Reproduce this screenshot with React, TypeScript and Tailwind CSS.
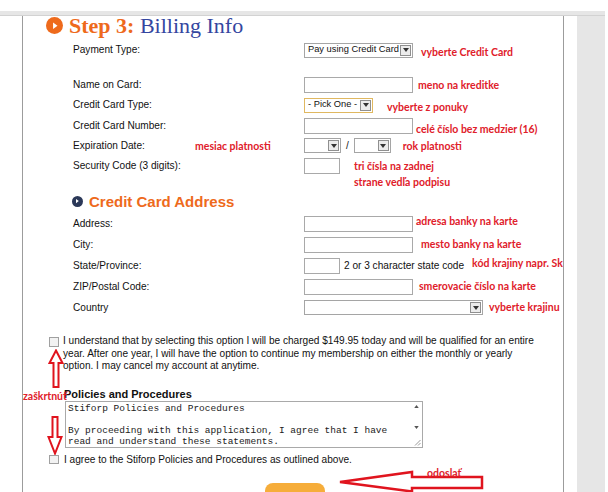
import React from "react";

const red = "text-[#e0202a]";

function Select({ w, text, className = "" }: { w: string; text?: string; className?: string }) {
  return (
    <div className={`shrink-0 flex items-center h-[15px] border bg-white ${w} ${className}`}>
      <span className="flex-1 pl-[3px] text-[9.3px] leading-none whitespace-nowrap overflow-hidden">{text}</span>
      <span className="w-[11px] h-[11px] mr-[1px] border border-[#8f8f8f] bg-[#ececec] flex items-center justify-center">
        <svg width="6" height="4" viewBox="0 0 6 4">
          <path d="M0 0 L6 0 L3 4 Z" fill="#333" />
        </svg>
      </span>
    </div>
  );
}

function Input({ w }: { w: string }) {
  return <div className={`shrink-0 h-[16px] border border-[#a9a9a9] bg-white ${w}`} />;
}

function Note({ children, className = "" }: { children: React.ReactNode; className?: string }) {
  return (
    <span className={`font-['Lato'] font-bold text-[10.5px] whitespace-nowrap ${red} ${className}`}>
      {children}
    </span>
  );
}

function Row({ label, children, h = "h-[21px]", extra }: { label: string; children?: React.ReactNode; h?: string; extra?: React.ReactNode }) {
  return (
    <div className={`flex items-center ${h}`}>
      <div className="w-[231px] shrink-0 flex items-center">
        <span className="w-[122px] shrink-0 whitespace-nowrap">{label}</span>
        {extra}
      </div>
      <div className="flex items-center shrink-0">{children}</div>
    </div>
  );
}

function PlayIcon({ size, bg }: { size: string; bg: string }) {
  return (
    <span className={`rounded-full flex items-center justify-center shrink-0 ${size} ${bg}`}>
      <svg viewBox="0 0 10 10" className="w-[55%] h-[55%]">
        <path d="M3.3 1.5 L8 5 L3.3 8.5 Z" fill="#fff" />
      </svg>
    </span>
  );
}

export default function App() {
  return (
    <div className="w-[608px] h-[492px] overflow-hidden bg-white relative font-['Liberation_Sans',Arial,sans-serif] text-[10.1px] text-[#111]">
      <div className="h-[11px]" />
      <div className="w-[605px] h-[5px] bg-[#e6e6e6] border-b border-[#d2d2d2]" />
      <div className="flex h-[476px]">
        <div className="w-[22px]" />
        <div className="w-[542px] border-l border-r border-[#9c9c9c] relative">
          {/* heading */}
          <div className="flex items-center h-[19px] pl-[23px]">
            <PlayIcon size="w-[17px] h-[17px]" bg="bg-[#ee6a1c]" />
            <span className="ml-[6px] font-['Liberation_Serif',serif] text-[22px] leading-[18px] whitespace-nowrap">
              <span className="font-bold text-[#ee6a1c]">Step 3: </span>
              <span className="text-[#3446a0]">Billing Info</span>
            </span>
          </div>

          <div className="pl-[50px] mt-[5px]">
            <Row label="Payment Type:" h="h-[20px]">
              <Select w="w-[109px]" text="Pay using Credit Card" className="border-[#a5a5a5]" />
              <Note className="ml-[8px] mt-[5px] leading-none">vyberte Credit Card</Note>
            </Row>
            <div className="h-[15px]" />
            <Row label="Name on Card:" h="h-[20px]">
              <Input w="w-[109px]" />
              <Note className="ml-[5px] leading-none">meno na kreditke</Note>
            </Row>
            <Row label="Credit Card Type:" h="h-[20px]">
              <Select w="w-[69px]" text="- Pick One -" className="border-[#e0b860]" />
              <Note className="ml-[14px] mt-[4px] leading-none">vyberte z ponuky</Note>
            </Row>
            <Row label="Credit Card Number:">
              <Input w="w-[109px]" />
              <Note className="ml-[3px] mt-[8px] leading-none">celé číslo bez medzier (16)</Note>
            </Row>
            <Row label="Expiration Date:" h="h-[20px]" extra={<Note className="leading-none">mesiac platnosti</Note>}>
              <Select w="w-[37px]" className="h-[13px] border-[#a5a5a5]" />
              <span className="mx-[5px]">/</span>
              <Select w="w-[37px]" className="h-[13px] border-[#a5a5a5]" />
              <Note className="ml-[12px] leading-none">rok platnosti</Note>
            </Row>
            <Row label="Security Code (3 digits):" h="h-[20px]">
              <Input w="w-[36px]" />
              <Note className="ml-[14px] leading-[16px] mt-[15px]">
                tri čísla na zadnej
                <br />
                strane vedľa podpisu
              </Note>
            </Row>
          </div>

          <div className="flex items-center h-[24px] mt-[13px] pl-[49px]">
            <PlayIcon size="w-[11px] h-[11px]" bg="bg-[#2b3858]" />
            <span className="ml-[6px] font-bold text-[15px] leading-none text-[#ee6a1c]">Credit Card Address</span>
          </div>

          <div className="pl-[50px]">
            <Row label="Address:">
              <Input w="w-[109px]" />
              <Note className="ml-[3px] -mt-[5px] leading-none">adresa banky na karte</Note>
            </Row>
            <Row label="City:">
              <Input w="w-[109px]" />
              <Note className="ml-[8px] leading-none">mesto banky na karte</Note>
            </Row>
            <Row label="State/Province:">
              <Input w="w-[36px]" />
              <span className="ml-[4px] whitespace-nowrap">2 or 3 character state code</span>
              <Note className="ml-[8px] -mt-[4px] leading-none">kód krajiny napr. Sk</Note>
            </Row>
            <Row label="ZIP/Postal Code:">
              <Input w="w-[109px]" />
              <Note className="ml-[6px] leading-none">smerovacie číslo na karte</Note>
            </Row>
            <Row label="Country">
              <Select w="w-[179px]" className="border-[#a5a5a5]" />
              <Note className="ml-[6px] leading-none">vyberte krajinu</Note>
            </Row>
          </div>

          {/* agreement */}
          <div className="flex mt-[17px] pl-[26px]">
            <span className="shrink-0 w-[10px] h-[10px] mt-[2px] border border-[#a0a0a0] bg-[#f2f2f2]" />
            <p className="ml-[4px] leading-[12.5px] whitespace-nowrap">
              I understand that by selecting this option I will be charged $149.95 today and will be qualified for an entire
              <br />
              year. After one year, I will have the option to continue my membership on either the monthly or yearly
              <br />
              option. I may cancel my account at anytime.
            </p>
          </div>

          <div className="pl-[41px] mt-[15px]">
            <div className="font-bold text-[11px] leading-[12px]">Policies and Procedures</div>
            <div className="flex w-[358px] h-[47px] ml-[1px] mt-[1px] border border-[#a9a9a9]">
              <div className="flex-1 pl-[2px] pt-[1px] font-['Liberation_Mono',monospace] text-[9.5px] leading-[11px] text-[#222] whitespace-nowrap overflow-hidden">
                Stiforp Policies and Procedures
                <br />
                <br />
                By proceeding with this application, I agree that I have
                <br />
                read and understand these statements.
              </div>
              <div className="w-[12px] flex flex-col items-center pt-[3px] bg-white">
                <svg width="5" height="3" viewBox="0 0 6 4">
                  <path d="M0 4 L6 4 L3 0 Z" fill="#555" />
                </svg>
                <svg width="5" height="3" viewBox="0 0 6 4" className="mt-[18px]">
                  <path d="M0 0 L6 0 L3 4 Z" fill="#555" />
                </svg>
                <svg width="7" height="7" viewBox="0 0 7 7" className="mt-auto mb-[1px] ml-[3px]">
                  <path d="M1 6.5 L6.5 1 M4 6.5 L6.5 4" stroke="#999" strokeWidth="1" />
                </svg>
              </div>
            </div>
          </div>

          <div className="flex items-center mt-[4px] pl-[26px]">
            <span className="shrink-0 w-[10px] h-[9px] border border-[#a0a0a0] bg-[#f2f2f2]" />
            <span className="ml-[5px] whitespace-nowrap">I agree to the Stiforp Policies and Procedures as outlined above.</span>
          </div>

          <div className="ml-[242px] mt-[16px] w-[60px] h-[16px] rounded-t-[8px] bg-[#f6ad3a]" />

          {/* annotations overlaid on the form */}
          <svg className="absolute left-[25px] top-[333px]" width="16" height="40" viewBox="0 0 16 40">
            <path d="M8 1.5 L14.5 14 L10.5 14 L10.5 38 L5.5 38 L5.5 14 L1.5 14 Z" fill="#fff" stroke="#e0141e" strokeWidth="2" />
          </svg>
          <span className={`absolute left-0 top-[375px] font-['Lato'] font-bold text-[10.5px] leading-none ${red}`}>zaškrtnúť</span>
          <svg className="absolute left-[24px] top-[400px]" width="16" height="39" viewBox="0 0 16 39">
            <path d="M5.5 1 L10.5 1 L10.5 21 L14.5 21 L8 37.5 L1.5 21 L5.5 21 Z" fill="#fff" stroke="#e0141e" strokeWidth="2" />
          </svg>
          <svg className="absolute left-[315px] top-[453px]" width="148" height="24" viewBox="0 0 148 24">
            <path d="M2 13 L74 3 L74 8 L144 8 L144 19 L74 19 L74 22.5 Z" fill="none" stroke="#e0141e" strokeWidth="2.5" />
          </svg>
          <Note className="absolute left-[404px] top-[452px] leading-none">odoslať</Note>
        </div>
        <div className="w-[13px]" />
        <div className="w-[28px] bg-[#e6e6e6]" />
      </div>
    </div>
  );
}
